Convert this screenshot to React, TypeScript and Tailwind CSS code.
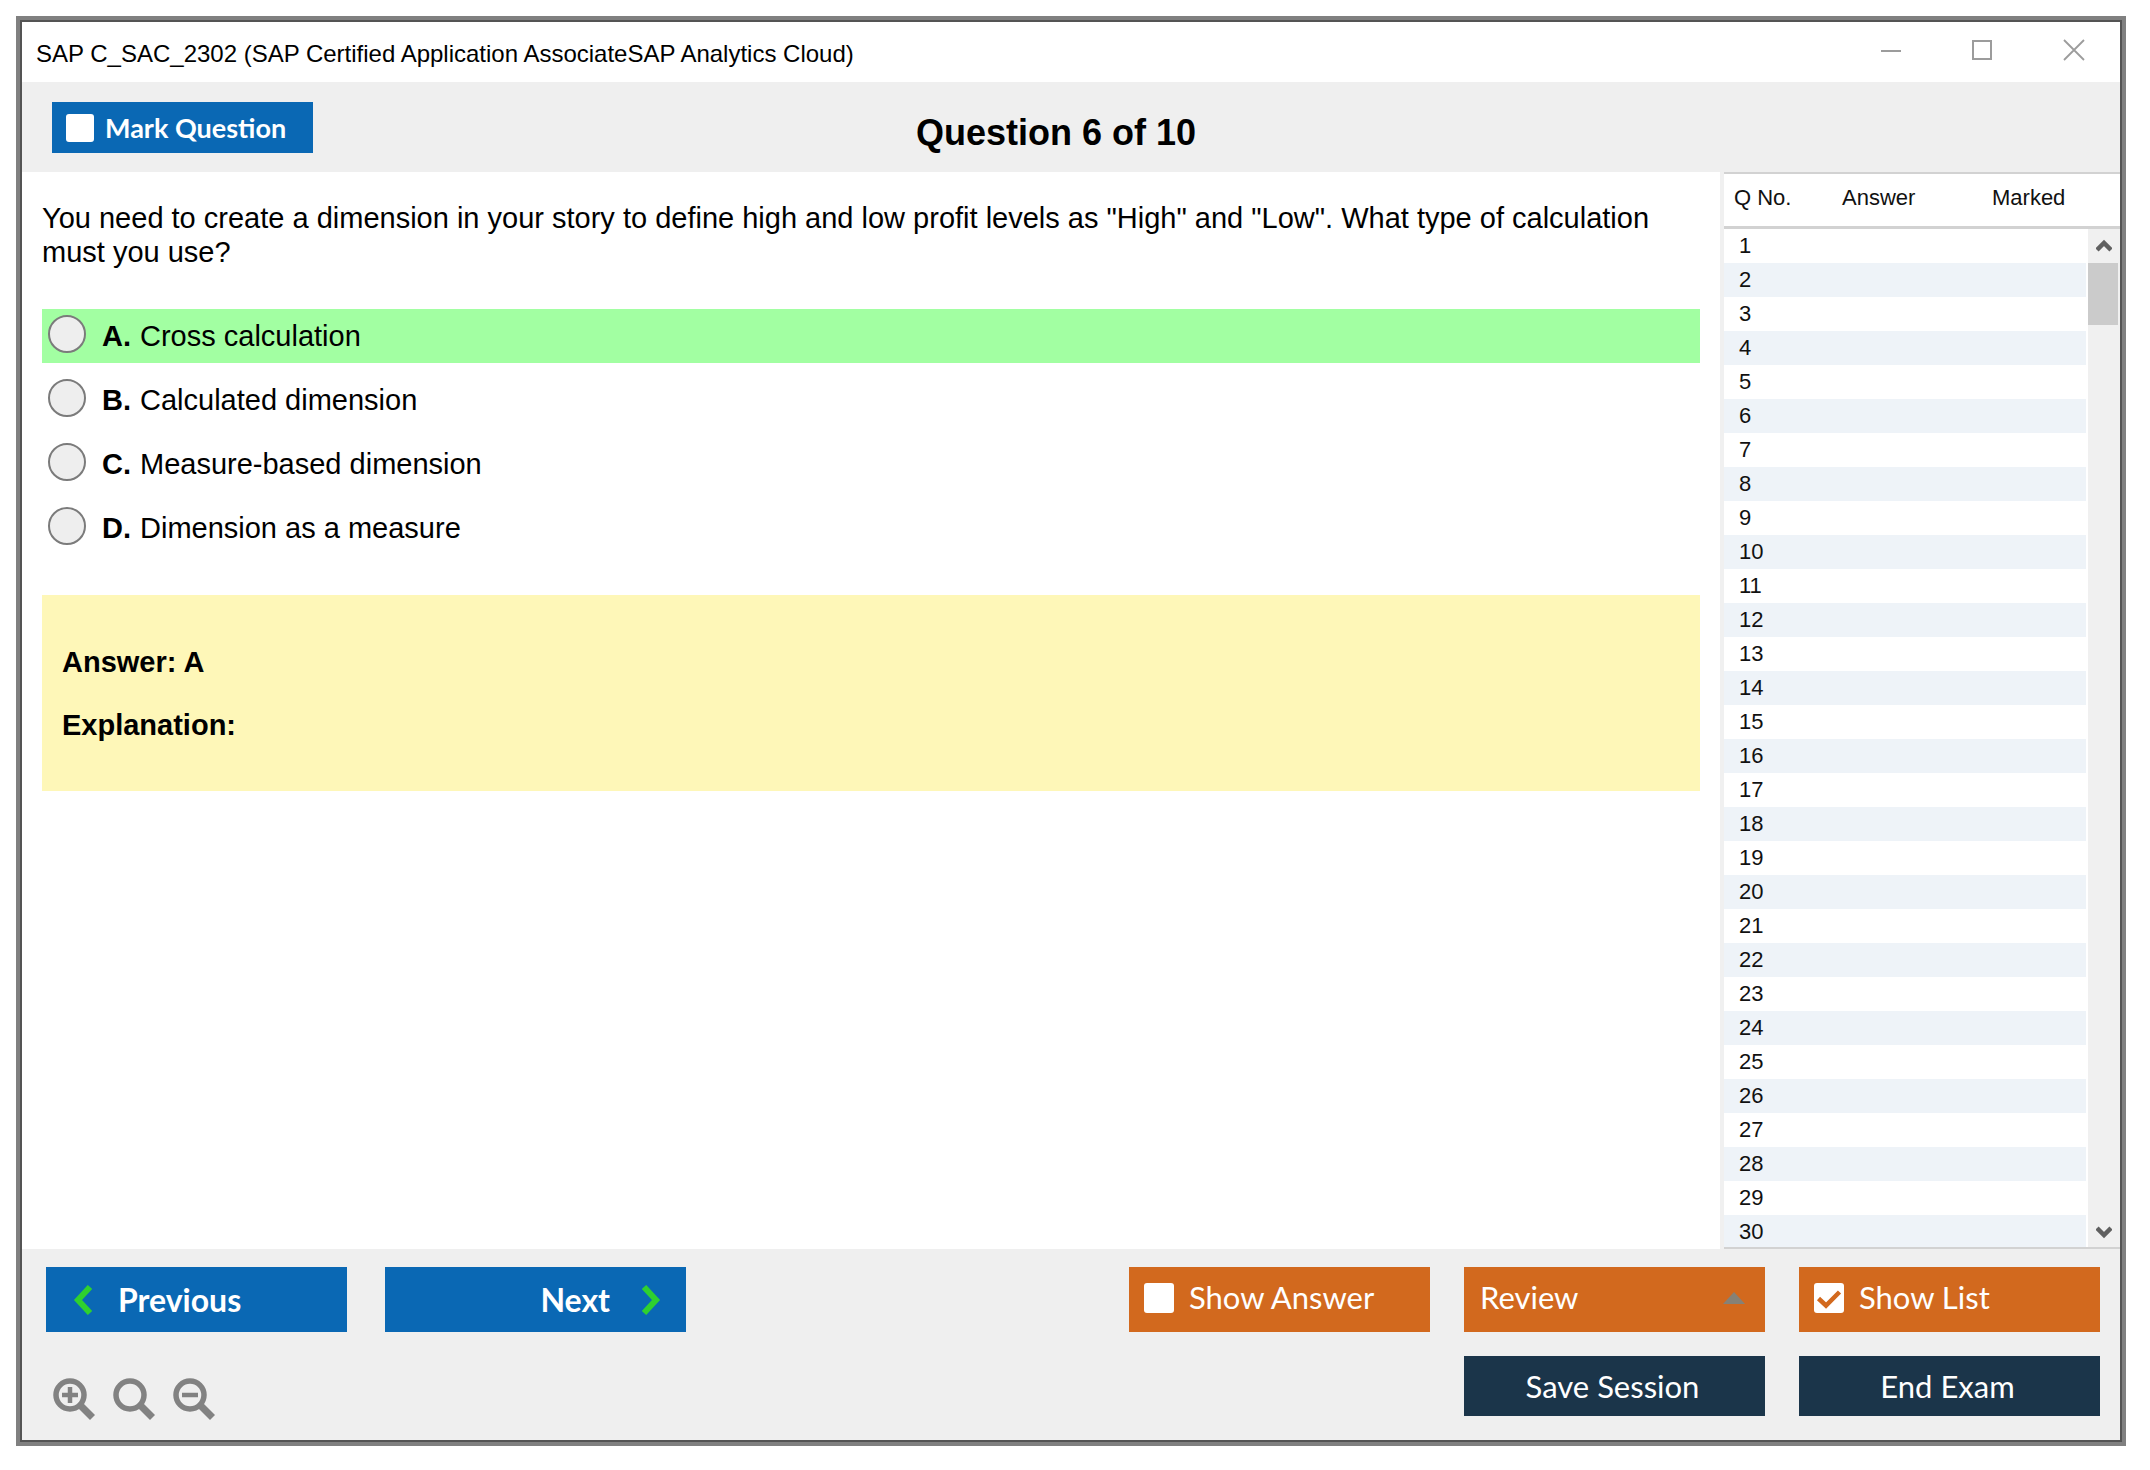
import { useState } from "react";
import clsx from "clsx";

const OPTIONS = [
  { key: "A", text: "Cross calculation" },
  { key: "B", text: "Calculated dimension" },
  { key: "C", text: "Measure-based dimension" },
  { key: "D", text: "Dimension as a measure" },
];

const CORRECT = "A";

const ROWS = Array.from({ length: 30 }, (_, i) => i + 1);

function ZoomIcon({ kind }: { kind: "in" | "reset" | "out" }) {
  return (
    <svg viewBox="0 0 42 42" className="size-[42px]" fill="none" stroke="#828282">
      <circle cx="17" cy="17" r="14" strokeWidth="5.5" />
      <path d="M27 27 L39.5 39.5" strokeWidth="7" />
      {kind !== "reset" && <path d="M9 17 H25" strokeWidth="4.5" />}
      {kind === "in" && <path d="M17 9 V25" strokeWidth="4.5" />}
    </svg>
  );
}

function CheckButton({
  label,
  checked,
  onChange,
  className,
  boxClassName,
}: {
  label: string;
  checked: boolean;
  onChange: (v: boolean) => void;
  className: string;
  boxClassName: string;
}) {
  return (
    <label className={clsx("flex items-center text-white", className)}>
      <span className={clsx("relative flex flex-none", boxClassName)}>
        <input
          type="checkbox"
          checked={checked}
          onChange={(e) => onChange(e.target.checked)}
          className="appearance-none size-full rounded-[3px] bg-white"
        />
        {checked && (
          <svg
            viewBox="0 0 30 30"
            className="absolute inset-0 size-full pointer-events-none"
            fill="none"
            stroke="#d2691e"
            strokeWidth="4.5"
          >
            <path d="M4.5 15.5 L12 22.5 L25.5 9" />
          </svg>
        )}
      </span>
      <span>{label}</span>
    </label>
  );
}

function TitleBar() {
  return (
    <div className="flex items-center justify-between h-[60px] flex-none pl-[14px] pr-[35px] bg-white">
      <div className="text-[24px] leading-[30px] pt-1">
        SAP C_SAC_2302 (SAP Certified Application AssociateSAP Analytics Cloud)
      </div>
      <div className="flex items-center gap-[70px] pb-1">
        <button aria-label="Minimize">
          <svg viewBox="0 0 22 22" className="size-[22px]" stroke="#9c9c9c" strokeWidth="2">
            <path d="M2 12 H22" />
          </svg>
        </button>
        <button aria-label="Maximize">
          <svg viewBox="0 0 22 22" className="size-[22px]" fill="none" stroke="#9c9c9c" strokeWidth="2">
            <rect x="2" y="2" width="18" height="18" />
          </svg>
        </button>
        <button aria-label="Close">
          <svg viewBox="0 0 22 22" className="size-[22px]" stroke="#9c9c9c" strokeWidth="1.8">
            <path d="M1 1 L21 21 M21 1 L1 21" />
          </svg>
        </button>
      </div>
    </div>
  );
}

function QuestionList() {
  return (
    <aside className="relative w-[400px] flex-none overflow-hidden border-l-4 border-[#f0f0f0] bg-white text-[22px] text-[#111]">
      <table className="w-full table-fixed border-separate border-spacing-0">
        <thead>
          <tr className="h-[57px] text-left leading-[46px]">
            <th className="w-[108px] p-0 pl-[10px] pb-[5px] font-normal border-t-2 border-b-3 border-[#d2d2d2]">
              Q No.
            </th>
            <th className="w-[150px] p-0 pl-[10px] pb-[5px] font-normal border-t-2 border-b-3 border-[#d2d2d2]">
              Answer
            </th>
            <th className="p-0 pl-[10px] pb-[5px] font-normal border-t-2 border-b-3 border-[#d2d2d2]">
              Marked
            </th>
          </tr>
        </thead>
        <tbody>
          {ROWS.map((n) => (
            <tr key={n} className="h-[34px] leading-[34px] even:bg-[#eef3f8]">
              <td className="p-0 pl-[15px]">{n}</td>
              <td className="p-0" />
              <td className="p-0" />
            </tr>
          ))}
        </tbody>
      </table>

      {/* scrollbar */}
      <div className="absolute right-0 top-[57px] bottom-0 w-[34px] flex flex-col items-center bg-[#f0f0f0] border-l-2 border-white">
        <button aria-label="Scroll up" className="h-[34px] flex-none flex items-center">
          <svg viewBox="0 0 16 14" className="w-4 h-[14px]" fill="none" stroke="#606060" strokeWidth="4.5">
            <path d="M1 11 L8 4 L15 11" />
          </svg>
        </button>
        <div className="h-[62px] w-full border-r-2 border-[#f0f0f0] bg-[#cbcbcb]" />
        <div className="flex-1" />
        <button aria-label="Scroll down" className="h-[34px] flex-none flex items-center">
          <svg viewBox="0 0 16 14" className="w-4 h-[14px]" fill="none" stroke="#606060" strokeWidth="4.5">
            <path d="M1 3 L8 10 L15 3" />
          </svg>
        </button>
      </div>
      <div className="absolute inset-x-0 bottom-0 h-[2px] bg-[#d2d2d2]" />
    </aside>
  );
}

export default function App() {
  const [picked, setPicked] = useState("");
  const [marked, setMarked] = useState(false);
  const [showAnswer, setShowAnswer] = useState(false);
  const [showList, setShowList] = useState(true);

  return (
    <div className="h-screen pt-4 pl-4 pr-6 pb-6 bg-white text-black font-['Liberation_Sans',Arial,sans-serif]">
      <div className="h-full border-4 border-[#808080]">
        <div className="h-full flex flex-col border-2 border-[#545454] bg-[#efefef]">
          <TitleBar />

          <header className="flex items-center h-[90px] flex-none pl-[30px] pr-[321px]">
            <CheckButton
              label="Mark Question"
              checked={marked}
              onChange={setMarked}
              className="w-[261px] h-[51px] pl-[14px] gap-[11px] pt-[2px] bg-[#0a68b4] font-['Lato',sans-serif] font-bold text-[27px]"
              boxClassName="size-7"
            />
            <h1 className="flex-1 text-center text-[36px] leading-[40px] font-bold pt-3">
              Question 6 of 10
            </h1>
          </header>

          <div className="flex flex-1 min-h-0">
            <main className="flex-1 bg-white pl-5 pr-5 pt-[29px]">
              <p className="text-[29px] leading-[34px]">
                You need to create a dimension in your story to define high and low profit levels as
                "High" and "Low". What type of calculation must you use?
              </p>

              <div className="flex flex-col gap-[10px] mt-10">
                {OPTIONS.map((o) => (
                  <label
                    key={o.key}
                    className={clsx(
                      "flex items-center h-[54px] pl-[6px] text-[29px]",
                      o.key === CORRECT && "bg-[#a2ffa2]",
                    )}
                  >
                    <input
                      type="radio"
                      name="answer"
                      checked={picked === o.key}
                      onChange={() => setPicked(o.key)}
                      className="appearance-none size-[38px] flex-none mb-1 rounded-full border-2 border-[#7b7b7b] bg-[#eeeeee] checked:bg-[#7b7b7b]"
                    />
                    <b className="w-[38px] ml-4 pt-[2px]">{o.key}.</b>
                    <span className="pt-[2px]">{o.text}</span>
                  </label>
                ))}
              </div>

              {/* answer box */}
              <div className="mt-10 px-5 pt-[53px] pb-[51px] bg-[#fef7b8] text-[29px] leading-[29px] font-bold flex flex-col gap-[34px]">
                <p>Answer: {CORRECT}</p>
                <p>Explanation:</p>
              </div>
            </main>

            {showList && <QuestionList />}
          </div>

          <footer className="flex justify-between flex-none h-[191px] pt-[18px] pl-6 pr-5 font-['Lato',sans-serif] text-[31px] text-white">
            <div className="flex flex-col">
              <div className="flex gap-[38px] text-[32px] font-bold">
                <button className="flex items-center w-[301px] h-[65px] pl-[27px] gap-[25px] bg-[#0a68b4]">
                  <svg viewBox="0 0 20 30" className="w-5 h-[30px]" fill="none" stroke="#2fd02f" strokeWidth="6">
                    <path d="M17 2 L5 15 L17 28" />
                  </svg>
                  Previous
                </button>
                <button className="flex items-center justify-end w-[301px] h-[65px] pr-[25px] gap-[31px] bg-[#0a68b4]">
                  Next
                  <svg viewBox="0 0 20 30" className="w-5 h-[30px]" fill="none" stroke="#2fd02f" strokeWidth="6">
                    <path d="M3 2 L15 15 L3 28" />
                  </svg>
                </button>
              </div>
              <div className="flex gap-[18px] mt-[46px] pl-[7px]">
                <button aria-label="Zoom in"><ZoomIcon kind="in" /></button>
                <button aria-label="Reset zoom"><ZoomIcon kind="reset" /></button>
                <button aria-label="Zoom out"><ZoomIcon kind="out" /></button>
              </div>
            </div>

            <div className="grid grid-cols-[301px_301px_301px] grid-rows-[65px_60px] gap-x-[34px] gap-y-6">
              <CheckButton
                label="Show Answer"
                checked={showAnswer}
                onChange={setShowAnswer}
                className="pl-[15px] pb-1 gap-[15px] bg-[#d2691e]"
                boxClassName="size-[30px]"
              />
              <div className="relative">
                <select
                  aria-label="Review"
                  className="appearance-none size-full pl-4 pb-1 bg-[#d2691e]"
                >
                  <option>Review</option>
                </select>
                <svg viewBox="0 0 22 12" className="absolute right-5 top-[25px] w-[22px] h-3 pointer-events-none">
                  <path d="M0 12 L11 0 L22 12 Z" fill="#868176" />
                </svg>
              </div>
              <CheckButton
                label="Show List"
                checked={showList}
                onChange={setShowList}
                className="pl-[15px] pb-1 gap-[15px] bg-[#d2691e]"
                boxClassName="size-[30px]"
              />
              <button className="col-start-2 pr-1 bg-[#1b354a]">Save Session</button>
              <button className="pr-1 bg-[#1b354a]">End Exam</button>
            </div>
          </footer>
        </div>
      </div>
    </div>
  );
}
